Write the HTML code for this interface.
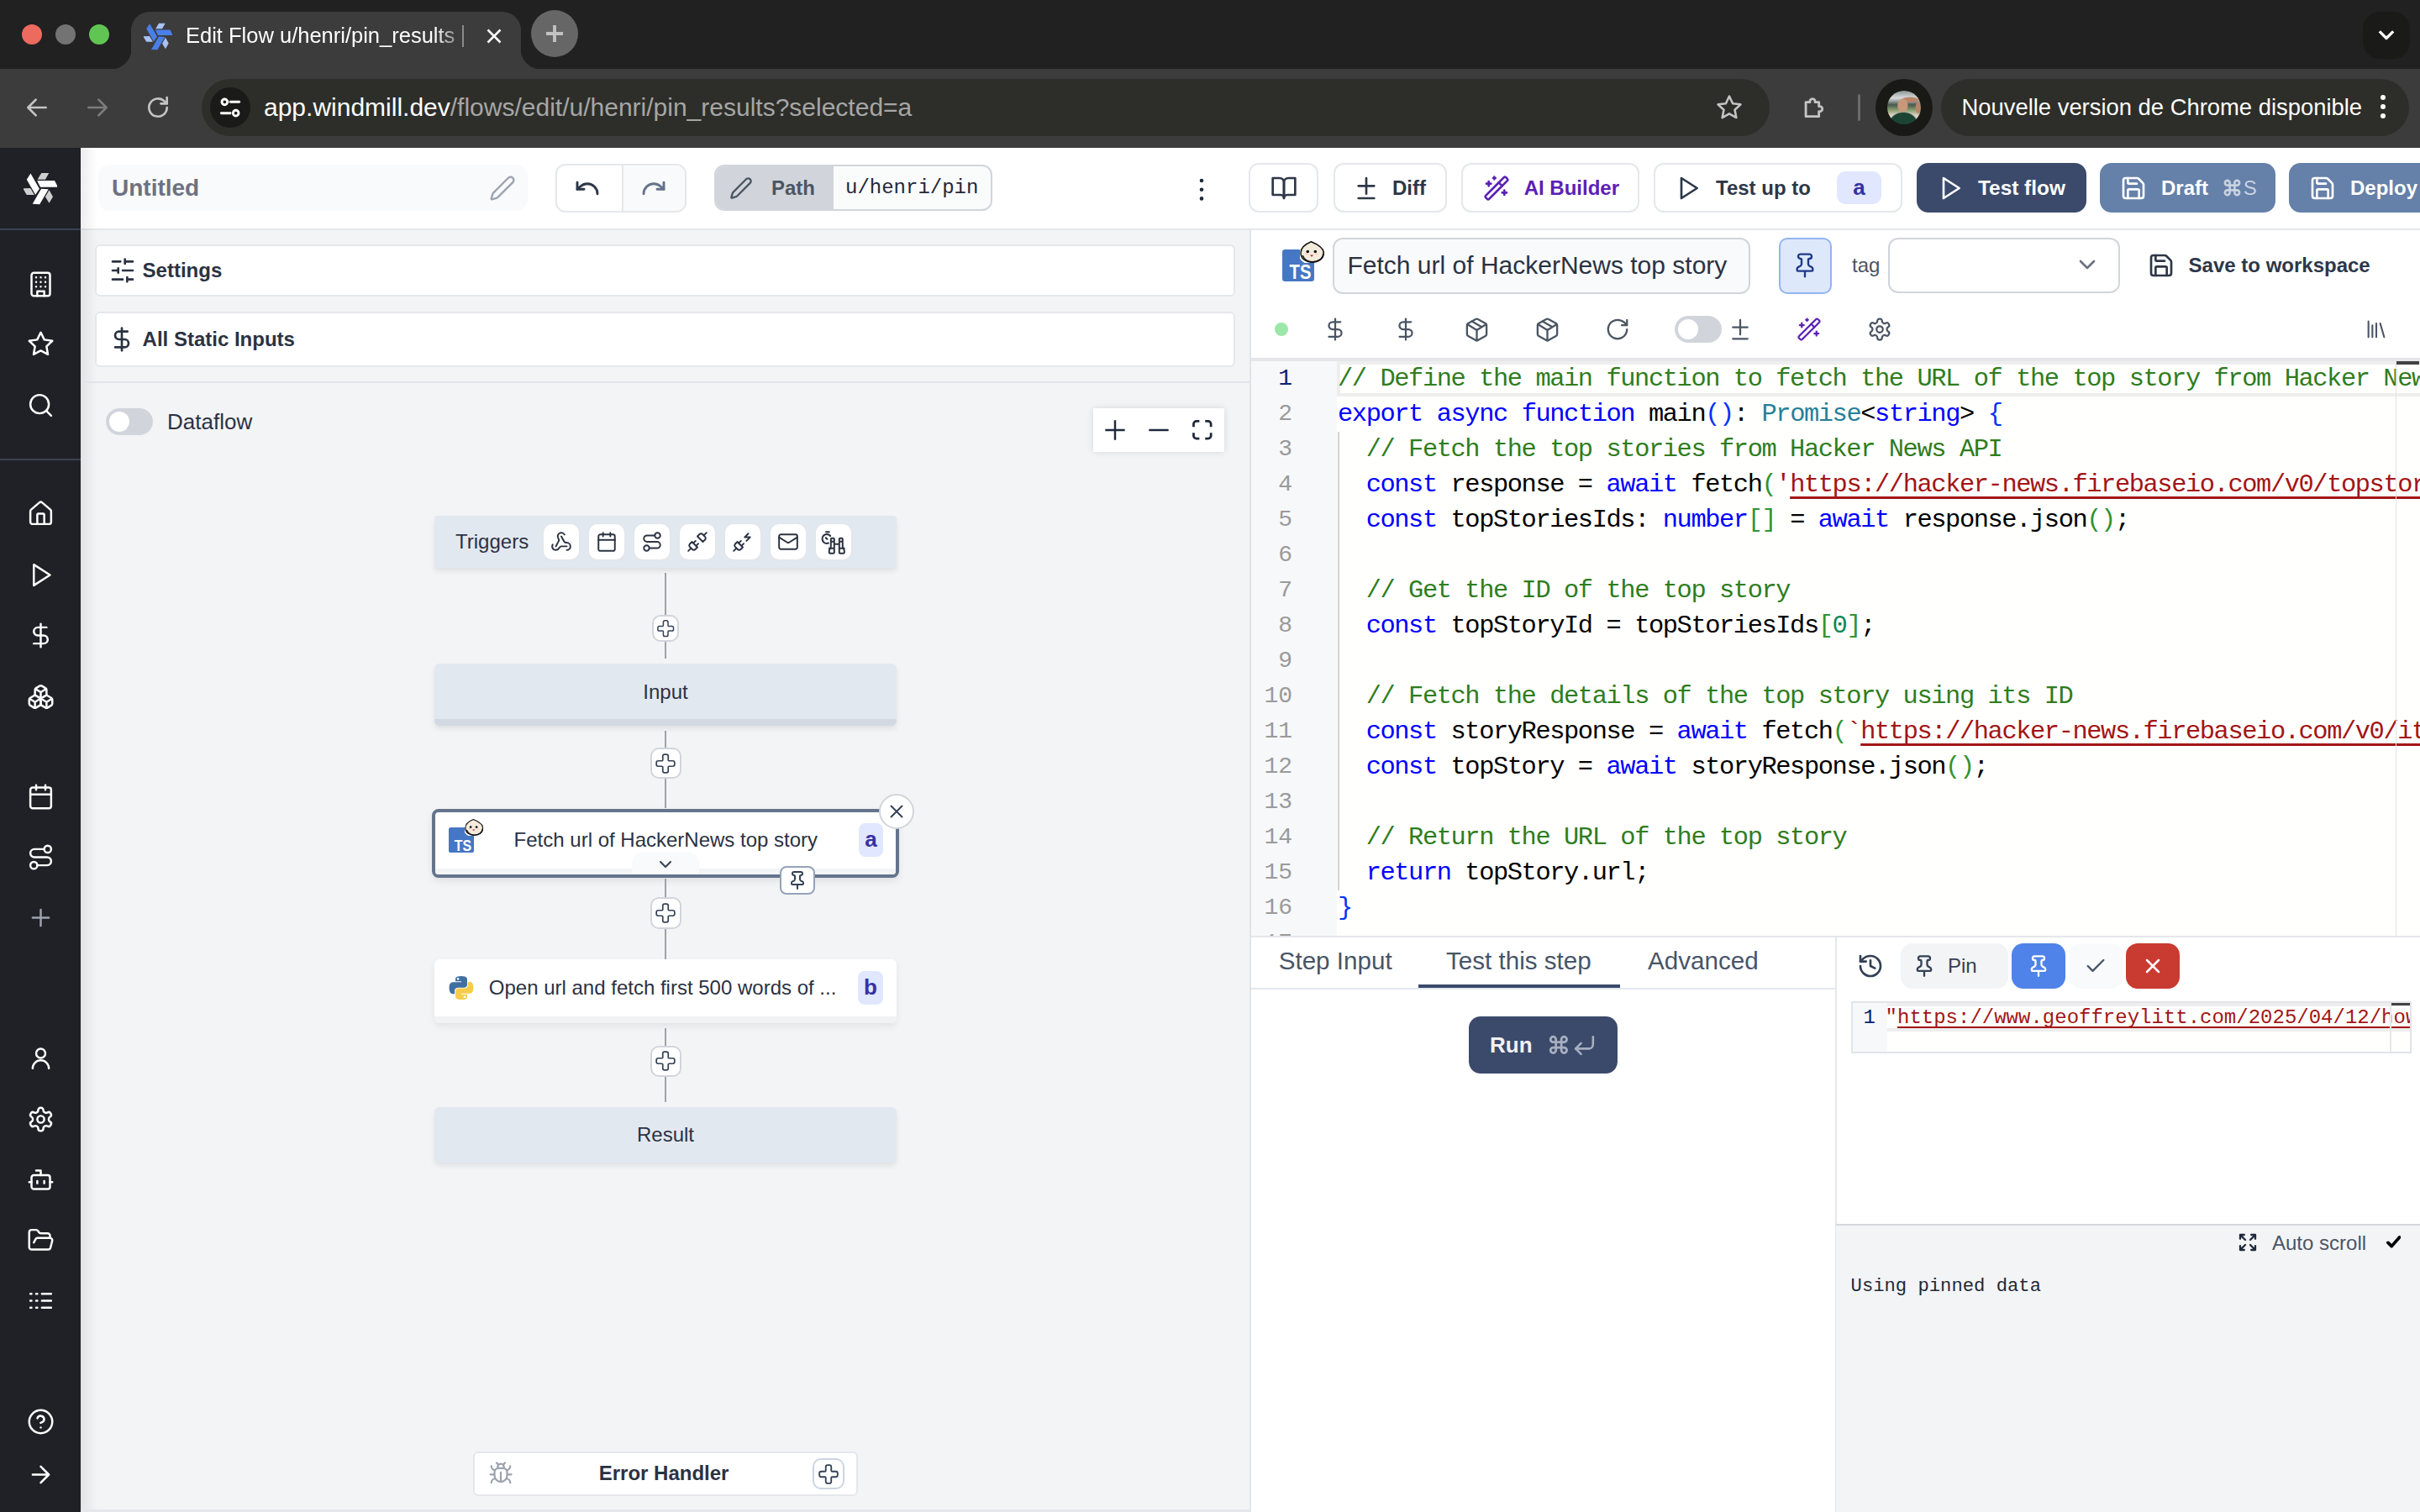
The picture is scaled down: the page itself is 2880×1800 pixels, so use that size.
<!DOCTYPE html>
<html><head><meta charset="utf-8">
<style>
html,body{margin:0;padding:0;overflow:hidden;background:#fff}
#r{zoom:2;position:relative;width:1440px;height:900px;overflow:hidden;font-family:"Liberation Sans",sans-serif;color:#2b3242}
.a{position:absolute}
svg.i{position:absolute;fill:none;stroke:currentColor;stroke-width:2;stroke-linecap:round;stroke-linejoin:round}
.t{position:absolute;white-space:pre}
.mono{font-family:"Liberation Mono",monospace}
@media (max-width:2000px){#r{zoom:1}}
.cl{font-size:15.2px!important;letter-spacing:-0.711px}
</style></head><body><div id="r">

<!-- ===== CHROME TAB STRIP ===== -->
<div class="a" style="left:0;top:0;width:1440px;height:41px;background:#212121"></div>
<div class="a" style="left:13px;top:14.5px;width:12px;height:12px;border-radius:50%;background:#ed6a5e"></div>
<div class="a" style="left:33px;top:14.5px;width:12px;height:12px;border-radius:50%;background:#737373"></div>
<div class="a" style="left:53px;top:14.5px;width:12px;height:12px;border-radius:50%;background:#61c554"></div>
<!-- tab -->
<div class="a" style="left:78px;top:7px;width:232px;height:34px;background:#3c3c3c;border-radius:11px 11px 0 0"></div>
<div class="a" style="left:66px;top:29px;width:12px;height:12px;background:radial-gradient(circle at 0 0,transparent 12px,#3c3c3c 12.5px)"></div>
<div class="a" style="left:310px;top:29px;width:12px;height:12px;background:radial-gradient(circle at 100% 0,transparent 12px,#3c3c3c 12.5px)"></div>
<svg class="a" style="left:85.5px;top:13px" width="17" height="17" viewBox="-235 -235 470 470">
 <g><polygon points="-45,-105 200,-105 245,-15 0,-15" fill="#4a7fe8"/></g>
 <g transform="rotate(120)"><polygon points="-45,-105 200,-105 245,-15 0,-15" fill="#4a7fe8"/></g><g transform="rotate(240)"><polygon points="-45,-105 200,-105 245,-15 0,-15" fill="#4a7fe8"/></g>
 <g><polygon points="120,-212 15,-212 -40,-120 70,-120" fill="#a9c2f3"/></g>
 <g transform="rotate(120)"><polygon points="120,-212 15,-212 -40,-120 70,-120" fill="#a9c2f3"/></g><g transform="rotate(240)"><polygon points="120,-212 15,-212 -40,-120 70,-120" fill="#a9c2f3"/></g>
</svg>
<div class="t" style="left:110.5px;top:12px;font-size:12.75px;line-height:18px;color:#fff;width:162px;overflow:hidden;-webkit-mask-image:linear-gradient(90deg,#000 148px,rgba(0,0,0,.35) 162px)">Edit Flow u/henri/pin_results | Windmill</div>
<div class="a" style="left:275px;top:15px;width:1px;height:13px;background:#8a8a8a"></div>
<svg class="i" style="left:288.75px;top:16.5px;color:#fff;stroke-width:3;stroke-linecap:butt" width="10" height="10" viewBox="0 0 24 24"><path d="M3 3 21 21M21 3 3 21"/></svg>
<div class="a" style="left:316px;top:6px;width:28px;height:28px;border-radius:50%;background:#666666"></div>
<svg class="i" style="left:325px;top:15px;color:#c2c2c2;stroke-width:4.6;stroke-linecap:butt" width="10" height="10" viewBox="0 0 24 24"><path d="M12 0v24M0 12h24"/></svg>
<div class="a" style="left:1406px;top:7px;width:28px;height:28px;border-radius:10px;background:#1a1a18"></div>
<svg class="i" style="left:1413px;top:14px;color:#fff;stroke-width:2.8;stroke-linecap:butt" width="14" height="14" viewBox="0 0 24 24"><path d="M5 8l7 7 7-7"/></svg>

<!-- ===== CHROME TOOLBAR ===== -->
<div class="a" style="left:0;top:41px;width:1440px;height:47px;background:#3c3c3c"></div>
<svg class="i" style="left:14px;top:56px;color:#c4c4c4" width="16" height="16" viewBox="0 0 24 24"><path d="M20 12H4M11 5l-7 7 7 7"/></svg>
<svg class="i" style="left:50px;top:56px;color:#7c7c7c" width="16" height="16" viewBox="0 0 24 24"><path d="M4 12h16M13 5l7 7-7 7"/></svg>
<svg class="i" style="left:86px;top:56px;color:#c4c4c4" width="16" height="16" viewBox="0 0 24 24"><path d="M20 12a8 8 0 1 1-2.4-5.7L20 8.5"/><path d="M20 3v5.5h-5.5"/></svg>
<div class="a" style="left:120px;top:47px;width:933px;height:34px;border-radius:17px;background:#2d2e29"></div>
<div class="a" style="left:125px;top:52px;width:24px;height:24px;border-radius:50%;background:#1a1a18"></div>
<svg class="i" style="left:129px;top:56px;color:#fff;stroke-width:2.2" width="16" height="16" viewBox="0 0 24 24"><circle cx="7" cy="7" r="2.5"/><path d="M12 7h8"/><circle cx="17" cy="17" r="2.5"/><path d="M4 17h8"/></svg>
<div class="t" style="left:157px;top:55px;font-size:15px;line-height:18px;color:#fff">app.windmill.dev<span style="color:#a6a6a6">/flows/edit/u/henri/pin_results?selected=a</span></div>
<svg class="i" style="left:1020.5px;top:55.5px;color:#c4c4c4;stroke-width:1.8" width="17" height="17" viewBox="0 0 24 24"><polygon points="12 2.5 14.9 8.6 21.5 9.4 16.6 13.9 17.9 20.5 12 17.2 6.1 20.5 7.4 13.9 2.5 9.4 9.1 8.6"/></svg>
<svg class="i" style="left:1071px;top:55.5px;color:#c4c4c4;stroke-width:2" width="17" height="17" viewBox="0 0 24 24"><path d="M5 7.5h3.5a2.2 2.2 0 1 1 4.2 0H16v3.6a2.2 2.2 0 1 1 0 4.2V19.5H5z"/></svg>
<div class="a" style="left:1105.25px;top:56px;width:1.5px;height:16px;background:#6b6b6b;border-radius:1px"></div>
<div class="a" style="left:1116px;top:47px;width:34px;height:34px;border-radius:50%;background:#191916"></div>
<div class="a" style="left:1122.9px;top:53.8px;width:20.2px;height:20.2px;border-radius:50%;background:radial-gradient(ellipse 17% 22% at 46% 44%,#c9987a 0 80%,transparent 100%),radial-gradient(ellipse 28% 9% at 68% 27%,#b98467 0 75%,transparent 100%),radial-gradient(ellipse 9% 20% at 92% 50%,#b98467 0 75%,transparent 100%),radial-gradient(ellipse 42% 32% at 48% 95%,#1c4434 0 90%,transparent 100%),linear-gradient(180deg,#8c9496 0,#d9dcdc 22%,#4a5650 42%,#7f9466 55%,#d6cfbd 72%,#d6cfbd 100%)"></div>
<div class="a" style="left:1155px;top:47px;width:278.5px;height:34px;border-radius:17px;background:#2d2e29"></div>
<div class="t" style="left:1167.25px;top:55px;font-size:13.7px;line-height:18px;color:#fff">Nouvelle version de Chrome disponible</div>
<div class="a" style="left:1416.3px;top:56.5px;width:3px;height:3px;border-radius:50%;background:#fff;box-shadow:0 5.5px 0 #fff,0 11px 0 #fff"></div>

<!-- ===== APP SIDEBAR ===== -->
<div class="a" id="sidebar" style="left:0;top:88px;width:48px;height:812px;background:#1f2127"></div>
<div class="a" style="left:0;top:136px;width:48px;height:1px;background:#3b4250"></div>
<div class="a" style="left:0;top:273px;width:48px;height:1px;background:#3b4250"></div>
<svg class="a" style="left:14px;top:102px" width="20" height="20" viewBox="-235 -235 470 470">
 <g><polygon points="-45,-105 200,-105 245,-15 0,-15" fill="#fff"/></g>
 <g transform="rotate(120)"><polygon points="-45,-105 200,-105 245,-15 0,-15" fill="#fff"/></g><g transform="rotate(240)"><polygon points="-45,-105 200,-105 245,-15 0,-15" fill="#fff"/></g>
 <g><polygon points="120,-212 15,-212 -40,-120 70,-120" fill="#cfcfcf"/></g>
 <g transform="rotate(120)"><polygon points="120,-212 15,-212 -40,-120 70,-120" fill="#cfcfcf"/></g><g transform="rotate(240)"><polygon points="120,-212 15,-212 -40,-120 70,-120" fill="#cfcfcf"/></g>
</svg>
<svg class="i" style="left:15.75px;top:160.75px;color:#fff;stroke-width:1.8" width="16.5" height="16.5" viewBox="0 0 24 24"><rect width="16" height="20" x="4" y="2" rx="2"/><path d="M9 22v-4h6v4M8 6h.01M16 6h.01M12 6h.01M12 10h.01M12 14h.01M16 10h.01M16 14h.01M8 10h.01M8 14h.01"/></svg>
<svg class="i" style="left:15.75px;top:196.55px;color:#fff;stroke-width:1.8" width="16.5" height="16.5" viewBox="0 0 24 24"><polygon points="12 2 15.09 8.26 22 9.27 17 14.14 18.18 21.02 12 17.77 5.82 21.02 7 14.14 2 9.27 8.91 8.26 12 2"/></svg>
<svg class="i" style="left:15.75px;top:232.75px;color:#fff;stroke-width:1.8" width="16.5" height="16.5" viewBox="0 0 24 24"><circle cx="11" cy="11" r="8"/><path d="m21 21-4.3-4.3"/></svg>
<svg class="i" style="left:15.75px;top:297.25px;color:#fff;stroke-width:1.8" width="16.5" height="16.5" viewBox="0 0 24 24"><path d="M15 21v-8a1 1 0 0 0-1-1h-4a1 1 0 0 0-1 1v8"/><path d="M3 10a2 2 0 0 1 .709-1.528l7-5.999a2 2 0 0 1 2.582 0l7 5.999A2 2 0 0 1 21 10v9a2 2 0 0 1-2 2H5a2 2 0 0 1-2-2z"/></svg>
<svg class="i" style="left:15.75px;top:333.75px;color:#fff;stroke-width:1.8" width="16.5" height="16.5" viewBox="0 0 24 24"><polygon points="6 3 20 12 6 21 6 3"/></svg>
<svg class="i" style="left:15.75px;top:369.75px;color:#fff;stroke-width:1.8" width="16.5" height="16.5" viewBox="0 0 24 24"><line x1="12" x2="12" y1="2" y2="22"/><path d="M17 5H9.5a3.5 3.5 0 0 0 0 7h5a3.5 3.5 0 0 1 0 7H6"/></svg>
<svg class="i" style="left:15.75px;top:406.25px;color:#fff;stroke-width:1.8" width="16.5" height="16.5" viewBox="0 0 24 24"><path d="M2.97 12.92A2 2 0 0 0 2 14.63v3.24a2 2 0 0 0 .97 1.71l3 1.8a2 2 0 0 0 2.06 0L12 19v-5.5l-5-3-4.03 2.42Z"/><path d="m7 16.5-4.74-2.85M7 16.5l5-3M7 16.5v5.17M12 13.5V19l3.97 2.38a2 2 0 0 0 2.06 0l3-1.8a2 2 0 0 0 .97-1.71v-3.24a2 2 0 0 0-.97-1.71L17 10.5l-5 3Z"/><path d="m17 16.5-5-3M17 16.5l4.74-2.85M17 16.5v5.17M7.97 4.42A2 2 0 0 0 7 6.13v4.37l5 3 5-3V6.13a2 2 0 0 0-.97-1.71l-3-1.8a2 2 0 0 0-2.06 0l-3 1.8Z"/><path d="M12 8 7.26 5.15M12 8l4.74-2.85M12 13.5V8"/></svg>
<svg class="i" style="left:15.75px;top:465.75px;color:#fff;stroke-width:1.8" width="16.5" height="16.5" viewBox="0 0 24 24"><rect width="18" height="18" x="3" y="4" rx="2"/><path d="M16 2v4M8 2v4M3 10h18"/></svg>
<svg class="i" style="left:15.75px;top:501.75px;color:#fff;stroke-width:1.8" width="16.5" height="16.5" viewBox="0 0 24 24"><circle cx="6" cy="19" r="3"/><path d="M9 19h8.5a3.5 3.5 0 0 0 0-7h-11a3.5 3.5 0 0 1 0-7H15"/><circle cx="18" cy="5" r="3"/></svg>
<svg class="i" style="left:15.75px;top:537.75px;color:#9ca3af;stroke-width:1.8" width="16.5" height="16.5" viewBox="0 0 24 24"><path d="M5 12h14M12 5v14"/></svg>
<svg class="i" style="left:15.75px;top:621.50px;color:#fff;stroke-width:1.8" width="16.5" height="16.5" viewBox="0 0 24 24"><circle cx="12" cy="8" r="4"/><path d="M19 21a7 7 0 0 0-14 0"/></svg>
<svg class="i" style="left:15.75px;top:657.75px;color:#fff;stroke-width:1.8" width="16.5" height="16.5" viewBox="0 0 24 24"><path d="M12.22 2h-.44a2 2 0 0 0-2 2v.18a2 2 0 0 1-1 1.73l-.43.25a2 2 0 0 1-2 0l-.15-.08a2 2 0 0 0-2.73.73l-.22.38a2 2 0 0 0 .73 2.73l.15.1a2 2 0 0 1 1 1.72v.51a2 2 0 0 1-1 1.74l-.15.09a2 2 0 0 0-.73 2.73l.22.38a2 2 0 0 0 2.73.73l.15-.08a2 2 0 0 1 2 0l.43.25a2 2 0 0 1 1 1.73V20a2 2 0 0 0 2 2h.44a2 2 0 0 0 2-2v-.18a2 2 0 0 1 1-1.73l.43-.25a2 2 0 0 1 2 0l.15.08a2 2 0 0 0 2.73-.73l.22-.39a2 2 0 0 0-.73-2.73l-.15-.08a2 2 0 0 1-1-1.74v-.5a2 2 0 0 1 1-1.74l.15-.09a2 2 0 0 0 .73-2.73l-.22-.38a2 2 0 0 0-2.73-.73l-.15.08a2 2 0 0 1-2 0l-.43-.25a2 2 0 0 1-1-1.73V4a2 2 0 0 0-2-2z"/><circle cx="12" cy="12" r="3"/></svg>
<svg class="i" style="left:15.75px;top:693.75px;color:#fff;stroke-width:1.8" width="16.5" height="16.5" viewBox="0 0 24 24"><path d="M12 8V4H8"/><rect width="16" height="12" x="4" y="8" rx="2"/><path d="M2 14h2M20 14h2M15 13v2M9 13v2"/></svg>
<svg class="i" style="left:15.75px;top:729.75px;color:#fff;stroke-width:1.8" width="16.5" height="16.5" viewBox="0 0 24 24"><path d="m6 14 1.5-2.9A2 2 0 0 1 9.24 10H20a2 2 0 0 1 1.94 2.5l-1.54 6a2 2 0 0 1-1.95 1.5H4a2 2 0 0 1-2-2V5a2 2 0 0 1 2-2h3.9a2 2 0 0 1 1.69.9l.81 1.2a2 2 0 0 0 1.67.9H18a2 2 0 0 1 2 2v2"/></svg>
<svg class="i" style="left:15.75px;top:765.75px;color:#fff;stroke-width:1.8" width="16.5" height="16.5" viewBox="0 0 24 24"><path d="M13 12h8M13 18h8M13 6h8M3 12h1M3 18h1M3 6h1M8 12h1M8 18h1M8 6h1"/></svg>
<svg class="i" style="left:15.75px;top:837.75px;color:#fff;stroke-width:1.8" width="16.5" height="16.5" viewBox="0 0 24 24"><circle cx="12" cy="12" r="10"/><path d="M9.09 9a3 3 0 0 1 5.83 1c0 2-3 3-3 3M12 17h.01"/></svg>
<svg class="i" style="left:15.75px;top:869.55px;color:#fff;stroke-width:1.8" width="16.5" height="16.5" viewBox="0 0 24 24"><path d="M5 12h14M12 5l7 7-7 7"/></svg>

<!-- ===== HEADER ===== -->
<div class="a" id="header" style="left:48px;top:88px;width:1392px;height:49px;background:#fff;border-bottom:1px solid #e5e7eb;box-sizing:border-box"></div>
<div class="a" style="left:58.5px;top:98px;width:255.5px;height:27.5px;background:#f9fafb;border-radius:7px"></div>
<div class="t" style="left:66.5px;top:104px;font-size:14px;line-height:16px;font-weight:700;color:#6b7280">Untitled</div>
<svg class="i" style="left:291px;top:104.2px;color:#9ca3af;stroke-width:1.8" width="16" height="16" viewBox="0 0 24 24"><path d="M21.174 6.812a1 1 0 0 0-3.986-3.987L3.842 16.174a2 2 0 0 0-.5.83l-1.321 4.352a.5.5 0 0 0 .623.622l4.353-1.32a2 2 0 0 0 .83-.497z"/></svg>
<div class="a" style="left:330.5px;top:97.3px;width:78px;height:29.2px;border:1px solid #e5e7eb;border-radius:6px;box-sizing:border-box;overflow:hidden;background:#fff"><div class="a" style="left:38.5px;top:0;width:40px;height:30px;background:#f9fafb;border-left:1px solid #e5e7eb"></div></div>
<svg class="i" style="left:341.7px;top:104px;color:#2d3748;stroke-width:2.2" width="16" height="16" viewBox="0 0 24 24"><path d="M3 7v6h6"/><path d="M21 17a9 9 0 0 0-9-9 9 9 0 0 0-6 2.3L3 13"/></svg>
<svg class="i" style="left:381px;top:104px;color:#64748b;stroke-width:2.2" width="16" height="16" viewBox="0 0 24 24"><path d="M21 7v6h-6"/><path d="M3 17a9 9 0 0 1 9-9 9 9 0 0 1 6 2.3l3 2.7"/></svg>
<div class="a" style="left:425px;top:98px;width:165.5px;height:27.5px;border:1px solid #d1d5db;border-radius:6px;box-sizing:border-box;overflow:hidden;background:#fafbfb"><div class="a" style="left:0;top:0;width:70px;height:28px;background:#d1d5db"></div></div>
<svg class="i" style="left:434px;top:105px;color:#4b5563;stroke-width:2" width="14" height="14" viewBox="0 0 24 24"><path d="M21.174 6.812a1 1 0 0 0-3.986-3.987L3.842 16.174a2 2 0 0 0-.5.83l-1.321 4.352a.5.5 0 0 0 .623.622l4.353-1.32a2 2 0 0 0 .83-.497z"/></svg>
<div class="t" style="left:459px;top:105px;font-size:12px;line-height:14px;font-weight:700;color:#4b5563">Path</div>
<div class="t mono" style="left:503px;top:105px;font-size:12px;line-height:14px;color:#1f2937">u/henri/pin</div>
<div class="a" style="left:714px;top:106.3px;width:2px;height:2px;border-radius:50%;background:#1f2937;box-shadow:0 4.65px 0 #1f2937,0 9.3px 0 #1f2937;transform:scale(1.15)"></div>

<div class="a" style="left:743px;top:97px;width:41.5px;height:29.5px;border:1px solid #e5e7eb;border-radius:6px;box-sizing:border-box"></div>
<svg class="i" style="left:755.75px;top:104px;color:#2d3748;stroke-width:2" width="16" height="16" viewBox="0 0 24 24"><path d="M2 3h6a4 4 0 0 1 4 4v14a3 3 0 0 0-3-3H2z"/><path d="M22 3h-6a4 4 0 0 0-4 4v14a3 3 0 0 1 3-3h7z"/></svg>
<div class="a" style="left:793.3px;top:97px;width:67.7px;height:29.5px;border:1px solid #e5e7eb;border-radius:6px;box-sizing:border-box"></div>
<svg class="i" style="left:804.8px;top:104px;color:#2d3748;stroke-width:2" width="16" height="16" viewBox="0 0 24 24"><path d="M12 3v14M5 10h14M5 21h14"/></svg>
<div class="t" style="left:828.5px;top:105px;font-size:12px;line-height:14px;font-weight:700;color:#2d3748">Diff</div>
<div class="a" style="left:869.5px;top:97px;width:105.75px;height:29.5px;border:1px solid #e5e7eb;border-radius:6px;box-sizing:border-box"></div>
<svg class="i" style="left:882.5px;top:104px;color:#5b21b6;stroke-width:2" width="16" height="16" viewBox="0 0 24 24"><path d="m21.64 3.64-1.28-1.28a1.21 1.21 0 0 0-1.72 0L2.36 18.64a1.21 1.21 0 0 0 0 1.72l1.28 1.28a1.2 1.2 0 0 0 1.72 0L21.64 5.36a1.2 1.2 0 0 0 0-1.72"/><path d="m14 7 3 3M5 6v4M19 14v4M10 2v2M7 8H3M21 16h-4M11 3H9"/></svg>
<div class="t" style="left:906.85px;top:105px;font-size:12px;line-height:14px;font-weight:700;color:#5b21b6">AI Builder</div>
<div class="a" style="left:983.75px;top:97px;width:148.25px;height:29.5px;border:1px solid #e5e7eb;border-radius:6px;box-sizing:border-box"></div>
<svg class="i" style="left:996.5px;top:104px;color:#2d3748;stroke-width:2" width="16" height="16" viewBox="0 0 24 24"><polygon points="6 3 20 12 6 21 6 3"/></svg>
<div class="t" style="left:1021px;top:105px;font-size:12px;line-height:14px;font-weight:700;color:#2d3748">Test up to</div>
<div class="a" style="left:1093px;top:102px;width:26.5px;height:19.5px;background:#e0e7ff;border-radius:5px;color:#3730a3;font-weight:700;font-size:13px;line-height:19px;text-align:center">a</div>
<div class="a" style="left:1140.5px;top:97px;width:101px;height:29.5px;background:#3b4a6b;border-radius:7px"></div>
<svg class="i" style="left:1152.4px;top:104px;color:#fff;stroke-width:2" width="16" height="16" viewBox="0 0 24 24"><polygon points="6 3 20 12 6 21 6 3"/></svg>
<div class="t" style="left:1177px;top:105px;font-size:12.2px;line-height:14px;font-weight:700;color:#fff">Test flow</div>
<div class="a" style="left:1249.5px;top:97px;width:104.25px;height:29.5px;background:#6580a9;border-radius:7px"></div>
<svg class="i" style="left:1261.3px;top:104px;color:#fff;stroke-width:2" width="16" height="16" viewBox="0 0 24 24"><path d="M15.2 3a2 2 0 0 1 1.4.6l3.8 3.8a2 2 0 0 1 .6 1.4V19a2 2 0 0 1-2 2H5a2 2 0 0 1-2-2V5a2 2 0 0 1 2-2z"/><path d="M17 21v-7a1 1 0 0 0-1-1H8a1 1 0 0 0-1 1v7M7 3v4a1 1 0 0 0 1 1h7"/></svg>
<div class="t" style="left:1286px;top:105px;font-size:12px;line-height:14px;font-weight:700;color:#fff">Draft</div>
<svg class="i" style="left:1322.5px;top:105.85px;color:#c9d2e0;stroke-width:2.7" width="11.5" height="11.5" viewBox="0 0 24 24"><path d="M15 6v12a3 3 0 1 0 3-3H6a3 3 0 1 0 3 3V6a3 3 0 1 0-3 3h12a3 3 0 1 0-3-3"/></svg><div class="t" style="left:1334.9px;top:105px;font-size:12px;line-height:14px;color:#c9d2e0">S</div>
<div class="a" style="left:1362px;top:97px;width:100px;height:29.5px;background:#6580a9;border-radius:7px"></div>
<svg class="i" style="left:1373.8px;top:104px;color:#fff;stroke-width:2" width="16" height="16" viewBox="0 0 24 24"><path d="M15.2 3a2 2 0 0 1 1.4.6l3.8 3.8a2 2 0 0 1 .6 1.4V19a2 2 0 0 1-2 2H5a2 2 0 0 1-2-2V5a2 2 0 0 1 2-2z"/><path d="M17 21v-7a1 1 0 0 0-1-1H8a1 1 0 0 0-1 1v7M7 3v4a1 1 0 0 0 1 1h7"/></svg>
<div class="t" style="left:1398.5px;top:105px;font-size:12px;line-height:14px;font-weight:700;color:#fff">Deploy</div>

<!-- ===== LEFT PANE ===== -->
<div class="a" id="left" style="left:48px;top:137px;width:696px;height:763px;background:#f3f4f6"></div>
<div class="a" style="left:48px;top:88px;width:10px;height:812px;background:linear-gradient(90deg,rgba(0,0,0,.07),rgba(0,0,0,0))"></div>
<div class="a" style="left:56.5px;top:145.5px;width:678.5px;height:31px;background:#fff;border:1px solid #e5e7eb;border-radius:3px;box-sizing:border-box"></div>
<svg class="i" style="left:64.8px;top:152.9px;color:#2b3242;stroke-width:2" width="16" height="16" viewBox="0 0 24 24"><path d="M21 4h-7M10 4H3M21 12h-9M8 12H3M21 20h-5M12 20H3M14 2v4M8 10v4M16 18v4"/></svg>
<div class="t" style="left:84.8px;top:154px;font-size:12px;line-height:14px;font-weight:700;color:#2b3242">Settings</div>
<div class="a" style="left:56.5px;top:185.7px;width:678.5px;height:32.8px;background:#fff;border:1px solid #e5e7eb;border-radius:3px;box-sizing:border-box"></div>
<svg class="i" style="left:64.5px;top:193.8px;color:#2b3242;stroke-width:2" width="16" height="16" viewBox="0 0 24 24"><line x1="12" x2="12" y1="2" y2="22"/><path d="M17 5H9.5a3.5 3.5 0 0 0 0 7h5a3.5 3.5 0 0 1 0 7H6"/></svg>
<div class="t" style="left:84.8px;top:195px;font-size:12px;line-height:14px;font-weight:700;color:#2b3242">All Static Inputs</div>
<div class="a" style="left:48px;top:227px;width:696px;height:1px;background:#e2e4e9"></div>
<div class="a" style="left:63px;top:243px;width:28px;height:16px;border-radius:8px;background:#d1d5db"></div>
<div class="a" style="left:65px;top:245px;width:12px;height:12px;border-radius:50%;background:#fff"></div>
<div class="t" style="left:99.5px;top:243.5px;font-size:13px;line-height:15px;color:#2b3242">Dataflow</div>
<div class="a" style="left:650.5px;top:243px;width:78px;height:26px;background:#fff;box-shadow:0 0 4px rgba(0,0,0,.12)"></div>
<svg class="i" style="left:656.5px;top:249px;color:#1e293b;stroke-width:2.1;stroke-linecap:butt" width="14" height="14" viewBox="0 0 24 24"><path d="M12 2v20M2 12h20"/></svg>
<svg class="i" style="left:682.5px;top:249px;color:#1e293b;stroke-width:2.1;stroke-linecap:butt" width="14" height="14" viewBox="0 0 24 24"><path d="M2 12h20"/></svg>
<svg class="i" style="left:708.5px;top:249.1px;color:#1e293b;stroke-width:2.4;stroke-linecap:butt" width="13.8" height="13.8" viewBox="0 0 24 24"><path d="M3 9V6a3 3 0 0 1 3-3h3M15 3h3a3 3 0 0 1 3 3v3M21 15v3a3 3 0 0 1-3 3h-3M9 21H6a3 3 0 0 1-3-3v-3"/></svg>

<div class="a" style="left:258.5px;top:307px;width:275px;height:31px;background:#e2e8f0;border-radius:2px;box-shadow:0 2px 3px rgba(0,0,0,.08)"></div>
<div class="t" style="left:271px;top:315.5px;font-size:12px;line-height:14px;color:#2b3242">Triggers</div>
<div class="a" style="left:323.5px;top:312px;width:21px;height:21px;background:#fff;border-radius:5px;box-shadow:0 0 0 0.6px #e3e5e9"></div><svg class="i" style="left:327.5px;top:316px;color:#2b3242;stroke-width:1.8" width="13" height="13" viewBox="0 0 24 24"><path d="M18 16.98h-5.99c-1.1 0-1.95.94-2.48 1.9A4 4 0 0 1 2 17c.01-.7.2-1.4.57-2"/><path d="m6 17 3.13-5.78c.53-.97.1-2.18-.5-3.1a4 4 0 1 1 6.89-4.06"/><path d="m12 6 3.13 5.73C15.66 12.7 16.9 13 18 13a4 4 0 0 1 0 8"/></svg>
<div class="a" style="left:350.5px;top:312px;width:21px;height:21px;background:#fff;border-radius:5px;box-shadow:0 0 0 0.6px #e3e5e9"></div><svg class="i" style="left:354.5px;top:316px;color:#2b3242;stroke-width:1.8" width="13" height="13" viewBox="0 0 24 24"><rect width="18" height="18" x="3" y="4" rx="2"/><path d="M16 2v4M8 2v4M3 10h18"/></svg>
<div class="a" style="left:377.5px;top:312px;width:21px;height:21px;background:#fff;border-radius:5px;box-shadow:0 0 0 0.6px #e3e5e9"></div><svg class="i" style="left:381.5px;top:316px;color:#2b3242;stroke-width:1.8" width="13" height="13" viewBox="0 0 24 24"><circle cx="6" cy="19" r="3"/><path d="M9 19h8.5a3.5 3.5 0 0 0 0-7h-11a3.5 3.5 0 0 1 0-7H15"/><circle cx="18" cy="5" r="3"/></svg>
<div class="a" style="left:404.5px;top:312px;width:21px;height:21px;background:#fff;border-radius:5px;box-shadow:0 0 0 0.6px #e3e5e9"></div><svg class="i" style="left:408.5px;top:316px;color:#2b3242;stroke-width:1.8" width="13" height="13" viewBox="0 0 24 24"><path d="m19 5 3-3M2 22l3-3"/><path d="M6.3 20.3a2.4 2.4 0 0 0 3.4 0L12 18l-6-6-2.3 2.3a2.4 2.4 0 0 0 0 3.4Z"/><path d="M7.5 13.5 10 11M10.5 16.5 13 14"/><path d="m12 6 6 6 2.3-2.3a2.4 2.4 0 0 0 0-3.4l-2.6-2.6a2.4 2.4 0 0 0-3.4 0Z"/></svg>
<div class="a" style="left:431.5px;top:312px;width:21px;height:21px;background:#fff;border-radius:5px;box-shadow:0 0 0 0.6px #e3e5e9"></div><svg class="i" style="left:435.5px;top:316px;color:#2b3242;stroke-width:1.8" width="13" height="13" viewBox="0 0 24 24"><path d="M6.3 20.3a2.4 2.4 0 0 0 3.4 0L12 18l-6-6-2.3 2.3a2.4 2.4 0 0 0 0 3.4Z"/><path d="m2 22 3-3M7.5 13.5 10 11M10.5 16.5 13 14"/><path d="m18 3-4 4h6l-4 4"/></svg>
<div class="a" style="left:458.5px;top:312px;width:21px;height:21px;background:#fff;border-radius:5px;box-shadow:0 0 0 0.6px #e3e5e9"></div><svg class="i" style="left:462.5px;top:316px;color:#2b3242;stroke-width:1.8" width="13" height="13" viewBox="0 0 24 24"><rect width="20" height="16" x="2" y="4" rx="2"/><path d="m22 7-8.97 5.7a1.94 1.94 0 0 1-2.06 0L2 7"/></svg>
<div class="a" style="left:485.5px;top:312px;width:21px;height:21px;background:#fff;border-radius:5px;box-shadow:0 0 0 0.6px #e3e5e9"></div><svg class="a" style="left:485.5px;top:312px;color:#2b3242" width="21" height="21" viewBox="0 0 21 21" fill="none" stroke="currentColor" stroke-linecap="round" stroke-linejoin="round"><g stroke-width="1.05"><path d="M8.57 7.01A2.7 2.7 0 1 0 7.42 11.29"/><path d="M6 4.6h1.9M5.9 8.1l0.8 0.8"/></g><g transform="translate(6.4,6.9) scale(0.5)" stroke-width="2"><path d="M10 10h4M19 7V4a1 1 0 0 0-1-1h-2a1 1 0 0 0-1 1v3M20 21a1 1 0 0 0 1-1v-1.93a4 4 0 0 0-.94-2.58l-.38-.47A4 4 0 0 1 19 12.44V8a1 1 0 0 0-1-1h-2a1 1 0 0 0-1 1v12a1 1 0 0 0 1 1zM15 15h6M9 15H3M4 21a1 1 0 0 1-1-1v-1.93a4 4 0 0 1 .94-2.58l.38-.47A4 4 0 0 0 5 12.44V8a1 1 0 0 1 1-1h2a1 1 0 0 1 1 1v12a1 1 0 0 1-1 1zM9 7V4a1 1 0 0 0-1-1H6a1 1 0 0 0-1 1v3"/></g></svg>
<div class="a" style="left:395.5px;top:341px;width:1px;height:25px;background:#a1a1aa"></div>
<div class="a" style="left:388px;top:366px;width:16px;height:16px;background:#fff;border:1px solid #d1d5db;border-radius:5px;box-sizing:border-box"></div><svg class="i" style="left:390.40px;top:368.40px;color:#334155;stroke-width:1.6" width="11.2" height="11.2" viewBox="0 0 24 24"><path d="M4 9a2 2 0 0 0-2 2v2a2 2 0 0 0 2 2h4a1 1 0 0 1 1 1v4a2 2 0 0 0 2 2h2a2 2 0 0 0 2-2v-4a1 1 0 0 1 1-1h4a2 2 0 0 0 2-2v-2a2 2 0 0 0-2-2h-4a1 1 0 0 1-1-1V4a2 2 0 0 0-2-2h-2a2 2 0 0 0-2 2v4a1 1 0 0 1-1 1z"/></svg>
<div class="a" style="left:395.5px;top:382px;width:1px;height:10px;background:#a1a1aa"></div>
<div class="a" style="left:258.5px;top:395px;width:275px;height:37px;background:#e2e8f0;border-radius:3px;overflow:hidden;box-shadow:0 2px 3px rgba(0,0,0,.08)"><div class="a" style="left:0;bottom:0;width:275px;height:4px;background:#d3d9e3"></div></div>
<div class="t" style="left:258.5px;width:275px;text-align:center;top:405px;font-size:12px;line-height:14px;color:#2b3242">Input</div>
<div class="a" style="left:395.5px;top:435px;width:1px;height:10px;background:#a1a1aa"></div>
<div class="a" style="left:386.75px;top:445px;width:18.6px;height:18.6px;background:#fff;border:1px solid #d1d5db;border-radius:5px;box-sizing:border-box"></div><svg class="i" style="left:389.50px;top:447.80px;color:#334155;stroke-width:1.6" width="13" height="13" viewBox="0 0 24 24"><path d="M4 9a2 2 0 0 0-2 2v2a2 2 0 0 0 2 2h4a1 1 0 0 1 1 1v4a2 2 0 0 0 2 2h2a2 2 0 0 0 2-2v-4a1 1 0 0 1 1-1h4a2 2 0 0 0 2-2v-2a2 2 0 0 0-2-2h-4a1 1 0 0 1-1-1V4a2 2 0 0 0-2-2h-2a2 2 0 0 0-2 2v4a1 1 0 0 1-1 1z"/></svg>
<div class="a" style="left:395.5px;top:463.6px;width:1px;height:17.399999999999977px;background:#a1a1aa"></div>
<div class="a" style="left:256.8px;top:481.3px;width:278.4px;height:41.4px;background:#fff;border:2px solid #64748b;border-radius:4px;box-sizing:border-box;overflow:hidden;box-shadow:0 2px 4px rgba(0,0,0,.08)"><div class="a" style="left:0;bottom:0;width:275px;height:3.5px;background:#f3f4f6"></div></div>
<svg class="a" style="left:267px;top:492.5px" width="15" height="15" viewBox="0 0 15 15"><rect x="0" y="0" width="15" height="15" rx="1.3" fill="#4577c4"/><text x="3.4" y="13.9" font-family="Liberation Sans" font-weight="700" font-size="9.6" fill="#fff" textLength="10.2" lengthAdjust="spacingAndGlyphs">TS</text></svg><svg class="a" style="left:276.4px;top:487.35px" width="11.3" height="10.11" viewBox="700 370 570 510"><path d="M720,640 C720,520 850,430 960,385 C1070,430 1250,520 1250,650 C1250,780 1120,860 980,860 C840,860 720,780 720,640 Z" fill="#fff" stroke="#fff" stroke-width="110"/><path d="M720,640 C720,520 850,430 960,385 C1070,430 1250,520 1250,650 C1250,780 1120,860 980,860 C840,860 720,780 720,640 Z" fill="#f4ebdc" stroke="#111" stroke-width="28"/><path d="M760,700 C800,800 900,850 990,850 C1120,850 1230,780 1240,650" fill="none" stroke="#111" stroke-width="30"/><circle cx="880" cy="612" r="34" fill="#111"/><circle cx="1055" cy="612" r="34" fill="#111"/><ellipse cx="845" cy="665" rx="32" ry="16" fill="#f7bfd0"/><ellipse cx="1090" cy="665" rx="32" ry="16" fill="#f7bfd0"/><path d="M932,688 L1012,688 L972,732 Z" fill="#b3232f"/></svg>
<div class="t" style="left:305.8px;top:493px;font-size:12px;line-height:14px;color:#2b3242">Fetch url of HackerNews top story</div>
<div class="a" style="left:511px;top:490.2px;width:14.5px;height:19.6px;background:#e0e7ff;border-radius:4px;color:#3730a3;font-weight:700;font-size:13px;line-height:19.6px;text-align:center">a</div>
<div class="a" style="left:376px;top:507px;width:39.75px;height:13.5px;background:#f9fafb;border-radius:7px 7px 0 0"></div>
<svg class="i" style="left:390px;top:508.5px;color:#334155;stroke-width:2" width="12" height="12" viewBox="0 0 24 24"><path d="m6 9 6 6 6-6"/></svg>
<div class="a" style="left:523px;top:472.5px;width:21px;height:21px;border-radius:50%;background:#fff;border:1px solid #d1d5db;box-sizing:border-box"></div>
<svg class="i" style="left:527px;top:476.5px;color:#334155;stroke-width:1.8" width="13" height="13" viewBox="0 0 24 24"><path d="M18 6 6 18M6 6l12 12"/></svg>
<div class="a" style="left:463.85px;top:515.25px;width:21.35px;height:17.25px;background:#fff;border:1px solid #94a3b8;border-radius:4px;box-sizing:border-box"></div>
<svg class="i" style="left:468.5px;top:518px;color:#334155;stroke-width:2" width="12" height="12" viewBox="0 0 24 24"><path d="M12 17v5M9 10.76a2 2 0 0 1-1.11 1.79l-1.78.9A2 2 0 0 0 5 15.24V16a1 1 0 0 0 1 1h12a1 1 0 0 0 1-1v-.76a2 2 0 0 0-1.11-1.79l-1.78-.9A2 2 0 0 1 15 10.76V7a1 1 0 0 1 1-1 2 2 0 0 0 0-4H8a2 2 0 0 0 0 4 1 1 0 0 1 1 1z"/></svg>
<div class="a" style="left:395.5px;top:523px;width:1px;height:11.2px;background:#a1a1aa"></div>
<div class="a" style="left:386.75px;top:534.2px;width:18.6px;height:18.6px;background:#fff;border:1px solid #d1d5db;border-radius:5px;box-sizing:border-box"></div><svg class="i" style="left:389.50px;top:537.00px;color:#334155;stroke-width:1.6" width="13" height="13" viewBox="0 0 24 24"><path d="M4 9a2 2 0 0 0-2 2v2a2 2 0 0 0 2 2h4a1 1 0 0 1 1 1v4a2 2 0 0 0 2 2h2a2 2 0 0 0 2-2v-4a1 1 0 0 1 1-1h4a2 2 0 0 0 2-2v-2a2 2 0 0 0-2-2h-4a1 1 0 0 1-1-1V4a2 2 0 0 0-2-2h-2a2 2 0 0 0-2 2v4a1 1 0 0 1-1 1z"/></svg>
<div class="a" style="left:395.5px;top:552.8px;width:1px;height:18.200000000000045px;background:#a1a1aa"></div>
<div class="a" style="left:258.5px;top:571px;width:275px;height:38px;background:#fff;border-radius:3px;overflow:hidden;box-shadow:0 2px 4px rgba(0,0,0,.07)"><div class="a" style="left:0;bottom:0;width:275px;height:4px;background:#f1f2f4"></div></div>
<svg class="a" style="left:267px;top:580.5px" width="15" height="15" viewBox="0 0 16 16"><path d="M7.9 0.5c-3.8 0-3.6 1.7-3.6 1.7v1.7h3.7v.5H2.8S.3 4.1.3 8s2.2 3.8 2.2 3.8h1.3V10s-.1-2.2 2.2-2.2h3.6s2.1 0 2.1-2V2.4S12 .5 7.9.5zM5.9 1.6c.4 0 .7.3.7.7s-.3.7-.7.7-.7-.3-.7-.7.3-.7.7-.7z" fill="#3f6fa3"/><path d="M8.1 15.5c3.8 0 3.6-1.7 3.6-1.7v-1.7H8v-.5h5.2s2.5.3 2.5-3.6-2.2-3.8-2.2-3.8h-1.3V6s.1 2.2-2.2 2.2H6.4s-2.1 0-2.1 2v3.4S4 15.5 8.1 15.5zm2-1.1c-.4 0-.7-.3-.7-.7s.3-.7.7-.7.7.3.7.7-.3.7-.7.7z" fill="#f5cd4a"/></svg>
<div class="t" style="left:290.9px;top:581px;font-size:12px;line-height:14px;color:#2b3242">Open url and fetch first 500 words of ...</div>
<div class="a" style="left:510.5px;top:578px;width:15px;height:19.85px;background:#e0e7ff;border-radius:4px;color:#3730a3;font-weight:700;font-size:13px;line-height:19.85px;text-align:center">b</div>
<div class="a" style="left:395.5px;top:612px;width:1px;height:10.25px;background:#a1a1aa"></div>
<div class="a" style="left:386.75px;top:622.25px;width:18.6px;height:18.6px;background:#fff;border:1px solid #d1d5db;border-radius:5px;box-sizing:border-box"></div><svg class="i" style="left:389.50px;top:625.05px;color:#334155;stroke-width:1.6" width="13" height="13" viewBox="0 0 24 24"><path d="M4 9a2 2 0 0 0-2 2v2a2 2 0 0 0 2 2h4a1 1 0 0 1 1 1v4a2 2 0 0 0 2 2h2a2 2 0 0 0 2-2v-4a1 1 0 0 1 1-1h4a2 2 0 0 0 2-2v-2a2 2 0 0 0-2-2h-4a1 1 0 0 1-1-1V4a2 2 0 0 0-2-2h-2a2 2 0 0 0-2 2v4a1 1 0 0 1-1 1z"/></svg>
<div class="a" style="left:395.5px;top:640.85px;width:1px;height:15.149999999999977px;background:#a1a1aa"></div>
<div class="a" style="left:258.5px;top:659px;width:275px;height:33px;background:#e2e8f0;border-radius:3px;box-shadow:0 2px 3px rgba(0,0,0,.08)"></div>
<div class="t" style="left:258.5px;width:275px;text-align:center;top:668.5px;font-size:12px;line-height:14px;color:#2b3242">Result</div>
<div class="a" style="left:281.35px;top:863.8px;width:229.25px;height:26.7px;background:#fff;border:1px solid #e5e7eb;border-radius:3px;box-sizing:border-box"></div>
<svg class="i" style="left:290.5px;top:869.7px;color:#9ca3af;stroke-width:1.8" width="15" height="15" viewBox="0 0 24 24"><path d="m8 2 1.88 1.88M14.12 3.88 16 2M9 7.13v-1a3.003 3.003 0 1 1 6 0v1"/><path d="M12 20c-3.3 0-6-2.7-6-6v-3a4 4 0 0 1 4-4h4a4 4 0 0 1 4 4v3c0 3.3-2.7 6-6 6M12 20v-9M6.53 9C4.6 8.8 3 7.1 3 5M6 13H2M3 21c0-2.1 1.7-3.9 3.8-4M20.97 5c0 2.1-1.6 3.8-3.5 4M22 13h-4M17.2 17c2.1.1 3.8 1.9 3.8 4"/></svg>
<div class="t" style="left:356.35px;top:870px;font-size:12px;line-height:14px;font-weight:700;color:#2b3242">Error Handler</div>
<div class="a" style="left:483.7px;top:867.9px;width:18.8px;height:18.85px;background:#fff;border:1px solid #cbd5e1;border-radius:5px;box-sizing:border-box"></div>
<svg class="i" style="left:486.6px;top:870.8px;color:#334155;stroke-width:1.7" width="13" height="13" viewBox="0 0 24 24"><path d="M4 9a2 2 0 0 0-2 2v2a2 2 0 0 0 2 2h4a1 1 0 0 1 1 1v4a2 2 0 0 0 2 2h2a2 2 0 0 0 2-2v-4a1 1 0 0 1 1-1h4a2 2 0 0 0 2-2v-2a2 2 0 0 0-2-2h-4a1 1 0 0 1-1-1V4a2 2 0 0 0-2-2h-2a2 2 0 0 0-2 2v4a1 1 0 0 1-1 1z"/></svg>
<div class="a" style="left:48px;top:898.5px;width:696px;height:1.5px;background:#e5e7eb"></div>

<!-- ===== RIGHT PANE ===== -->
<div class="a" id="right" style="left:743.5px;top:137px;width:696.5px;height:763px;background:#fff;border-left:1px solid #e1e4e8;box-sizing:border-box"></div>
<svg class="a" style="left:763px;top:148.5px" width="19" height="19" viewBox="0 0 15 15"><rect x="0" y="0" width="15" height="15" rx="1.3" fill="#4577c4"/><text x="3.4" y="13.9" font-family="Liberation Sans" font-weight="700" font-size="9.6" fill="#fff" textLength="10.2" lengthAdjust="spacingAndGlyphs">TS</text></svg><svg class="a" style="left:773.25px;top:143.55px" width="14.7" height="13.15" viewBox="700 370 570 510"><path d="M720,640 C720,520 850,430 960,385 C1070,430 1250,520 1250,650 C1250,780 1120,860 980,860 C840,860 720,780 720,640 Z" fill="#fff" stroke="#fff" stroke-width="110"/><path d="M720,640 C720,520 850,430 960,385 C1070,430 1250,520 1250,650 C1250,780 1120,860 980,860 C840,860 720,780 720,640 Z" fill="#f4ebdc" stroke="#111" stroke-width="28"/><path d="M760,700 C800,800 900,850 990,850 C1120,850 1230,780 1240,650" fill="none" stroke="#111" stroke-width="30"/><circle cx="880" cy="612" r="34" fill="#111"/><circle cx="1055" cy="612" r="34" fill="#111"/><ellipse cx="845" cy="665" rx="32" ry="16" fill="#f7bfd0"/><ellipse cx="1090" cy="665" rx="32" ry="16" fill="#f7bfd0"/><path d="M932,688 L1012,688 L972,732 Z" fill="#b3232f"/></svg>
<div class="a" style="left:792.8px;top:141.25px;width:248.7px;height:33.5px;background:#f9fafb;border:1px solid #d1d5db;border-radius:6px;box-sizing:border-box"></div>
<div class="t" style="left:801.75px;top:149.5px;font-size:15px;line-height:17px;color:#2b3242">Fetch url of HackerNews top story</div>
<div class="a" style="left:1058.5px;top:141.25px;width:31.35px;height:33.5px;background:#dde8fb;border:1px solid #93b4f0;border-radius:5px;box-sizing:border-box"></div>
<svg class="i" style="left:1066.20px;top:150.00px;color:#1e3a8a;stroke-width:1.8;" width="16" height="16" viewBox="0 0 24 24"><path d="M12 17v5M9 10.76a2 2 0 0 1-1.11 1.79l-1.78.9A2 2 0 0 0 5 15.24V16a1 1 0 0 0 1 1h12a1 1 0 0 0 1-1v-.76a2 2 0 0 0-1.11-1.79l-1.78-.9A2 2 0 0 1 15 10.76V7a1 1 0 0 1 1-1 2 2 0 0 0 0-4H8a2 2 0 0 0 0 4 1 1 0 0 1 1 1z"/></svg>

<div class="t" style="left:1102px;top:151px;font-size:12px;line-height:14px;color:#4b5563">tag</div>
<div class="a" style="left:1123.5px;top:141.25px;width:138px;height:33px;background:#fff;border:1px solid #d1d5db;border-radius:6px;box-sizing:border-box"></div>
<svg class="i" style="left:1234.00px;top:149.50px;color:#6b7280;stroke-width:2;" width="16" height="16" viewBox="0 0 24 24"><path d="m6 9 6 6 6-6"/></svg>
<svg class="i" style="left:1277.80px;top:150.00px;color:#2d3748;stroke-width:2;" width="16" height="16" viewBox="0 0 24 24"><path d="M15.2 3a2 2 0 0 1 1.4.6l3.8 3.8a2 2 0 0 1 .6 1.4V19a2 2 0 0 1-2 2H5a2 2 0 0 1-2-2V5a2 2 0 0 1 2-2z"/><path d="M17 21v-7a1 1 0 0 0-1-1H8a1 1 0 0 0-1 1v7M7 3v4a1 1 0 0 0 1 1h7"/></svg>

<div class="t" style="left:1302.3px;top:151px;font-size:12px;line-height:14px;font-weight:700;color:#2d3748">Save to workspace</div>
<div class="a" style="left:758.3px;top:192px;width:8px;height:8px;border-radius:50%;background:#9de6a9"></div>
<svg class="i" style="left:786.80px;top:188.50px;color:#4b5563;stroke-width:1.8;" width="15" height="15" viewBox="0 0 24 24"><line x1="12" x2="12" y1="2" y2="22"/><path d="M17 5H9.5a3.5 3.5 0 0 0 0 7h5a3.5 3.5 0 0 1 0 7H6"/></svg>
<svg class="i" style="left:829.00px;top:188.50px;color:#4b5563;stroke-width:1.8;" width="15" height="15" viewBox="0 0 24 24"><line x1="12" x2="12" y1="2" y2="22"/><path d="M17 5H9.5a3.5 3.5 0 0 0 0 7h5a3.5 3.5 0 0 1 0 7H6"/></svg>
<svg class="i" style="left:870.75px;top:188.25px;color:#4b5563;stroke-width:1.8;" width="15.5" height="15.5" viewBox="0 0 24 24"><path d="M11 21.73a2 2 0 0 0 2 0l7-4A2 2 0 0 0 21 16V8a2 2 0 0 0-1-1.73l-7-4a2 2 0 0 0-2 0l-7 4A2 2 0 0 0 3 8v8a2 2 0 0 0 1 1.73z"/><path d="M12 22V12M3.3 7l7.703 4.734a2 2 0 0 0 1.994 0L20.7 7M7.5 4.27l9 5.15"/></svg>
<svg class="i" style="left:912.75px;top:188.25px;color:#4b5563;stroke-width:1.8;" width="15.5" height="15.5" viewBox="0 0 24 24"><path d="M11 21.73a2 2 0 0 0 2 0l7-4A2 2 0 0 0 21 16V8a2 2 0 0 0-1-1.73l-7-4a2 2 0 0 0-2 0l-7 4A2 2 0 0 0 3 8v8a2 2 0 0 0 1 1.73z"/><path d="M12 22V12M3.3 7l7.703 4.734a2 2 0 0 0 1.994 0L20.7 7M7.5 4.27l9 5.15"/></svg>
<svg class="i" style="left:955.00px;top:188.50px;color:#4b5563;stroke-width:1.8;" width="15" height="15" viewBox="0 0 24 24"><path d="M21 12a9 9 0 1 1-9-9c2.52 0 4.93 1 6.74 2.74L21 8"/><path d="M21 3v5h-5"/></svg>

<div class="a" style="left:996.5px;top:188px;width:28px;height:16px;border-radius:8px;background:#d1d5db"></div>
<div class="a" style="left:998.5px;top:190px;width:12px;height:12px;border-radius:50%;background:#fff"></div>
<svg class="i" style="left:1027.80px;top:188.50px;color:#4b5563;stroke-width:1.8;" width="15" height="15" viewBox="0 0 24 24"><path d="M12 3v14M5 10h14M5 21h14"/></svg>
<svg class="i" style="left:1069.00px;top:188.50px;color:#5b21b6;stroke-width:1.8;" width="15" height="15" viewBox="0 0 24 24"><path d="m21.64 3.64-1.28-1.28a1.21 1.21 0 0 0-1.72 0L2.36 18.64a1.21 1.21 0 0 0 0 1.72l1.28 1.28a1.2 1.2 0 0 0 1.72 0L21.64 5.36a1.2 1.2 0 0 0 0-1.72"/><path d="m14 7 3 3M5 6v4M19 14v4M10 2v2M7 8H3M21 16h-4M11 3H9"/></svg>
<svg class="i" style="left:1110.90px;top:188.50px;color:#4b5563;stroke-width:1.8;" width="15" height="15" viewBox="0 0 24 24"><path d="M12.22 2h-.44a2 2 0 0 0-2 2v.18a2 2 0 0 1-1 1.73l-.43.25a2 2 0 0 1-2 0l-.15-.08a2 2 0 0 0-2.73.73l-.22.38a2 2 0 0 0 .73 2.73l.15.1a2 2 0 0 1 1 1.72v.51a2 2 0 0 1-1 1.74l-.15.09a2 2 0 0 0-.73 2.73l.22.38a2 2 0 0 0 2.73.73l.15-.08a2 2 0 0 1 2 0l.43.25a2 2 0 0 1 1 1.73V20a2 2 0 0 0 2 2h.44a2 2 0 0 0 2-2v-.18a2 2 0 0 1 1-1.73l.43-.25a2 2 0 0 1 2 0l.15.08a2 2 0 0 0 2.73-.73l.22-.39a2 2 0 0 0-.73-2.73l-.15-.08a2 2 0 0 1-1-1.74v-.5a2 2 0 0 1 1-1.74l.15-.09a2 2 0 0 0 .73-2.73l-.22-.38a2 2 0 0 0-2.73-.73l-.15.08a2 2 0 0 1-2 0l-.43-.25a2 2 0 0 1-1-1.73V4a2 2 0 0 0-2-2z"/><circle cx="12" cy="12" r="3"/></svg>
<svg class="i" style="left:1406.80px;top:189.00px;color:#4b5563;stroke-width:1.8;" width="14" height="14" viewBox="0 0 24 24"><path d="m16 6 4 14M12 6v14M8 8v12M4 4v16"/></svg>

<div class="a" style="left:744.5px;top:213px;width:695.5px;height:2px;background:#e4e6ea"></div>
<div id="editor" class="a" style="left:744.5px;top:215px;width:695.5px;height:342px;background:#fffffe;overflow:hidden">
<div class="a" style="left:0;top:0;width:51px;height:342px;background:#f7f8fa"></div>
<div class="a" style="left:51px;top:0;width:700px;height:21px;border:2px solid #eeeeee;box-sizing:border-box"></div>
<div class="a" style="left:51.5px;top:42px;width:1px;height:273px;background:#d3d3d3"></div>
<div class="t mono" style="right:671.0px;top:0px;font-size:14px;line-height:21px;color:#0b216f;text-align:right">1</div><div class="t mono cl" style="left:51.5px;top:0px;font-size:14px;line-height:21px;color:#000"><span style="color:#2f7d1d">// Define the main function to fetch the URL of the top story from Hacker News</span></div>
<div class="t mono" style="right:671.0px;top:21px;font-size:14px;line-height:21px;color:#9a9a9a;text-align:right">2</div><div class="t mono cl" style="left:51.5px;top:21px;font-size:14px;line-height:21px;color:#000"><span style="color:#0000ff">export</span> <span style="color:#0000ff">async</span> <span style="color:#0000ff">function</span> main<span style="color:#0431fa">()</span>: <span style="color:#267f99">Promise</span>&lt;<span style="color:#0000ff">string</span>&gt; <span style="color:#0431fa">{</span></div>
<div class="t mono" style="right:671.0px;top:42px;font-size:14px;line-height:21px;color:#9a9a9a;text-align:right">3</div><div class="t mono cl" style="left:51.5px;top:42px;font-size:14px;line-height:21px;color:#000">  <span style="color:#2f7d1d">// Fetch the top stories from Hacker News API</span></div>
<div class="t mono" style="right:671.0px;top:63px;font-size:14px;line-height:21px;color:#9a9a9a;text-align:right">4</div><div class="t mono cl" style="left:51.5px;top:63px;font-size:14px;line-height:21px;color:#000">  <span style="color:#0000ff">const</span> response = <span style="color:#0000ff">await</span> fetch<span style="color:#319331">(</span><span style="color:#a31515">'</span><span style="color:#a31515;text-decoration:underline;text-underline-offset:3px;text-decoration-skip-ink:none">https://hacker-news.firebaseio.com/v0/topstories.json</span><span style="color:#a31515">'</span><span style="color:#319331">)</span>;</div>
<div class="t mono" style="right:671.0px;top:84px;font-size:14px;line-height:21px;color:#9a9a9a;text-align:right">5</div><div class="t mono cl" style="left:51.5px;top:84px;font-size:14px;line-height:21px;color:#000">  <span style="color:#0000ff">const</span> topStoriesIds: <span style="color:#0000ff">number</span><span style="color:#319331">[]</span> = <span style="color:#0000ff">await</span> response.json<span style="color:#319331">()</span>;</div>
<div class="t mono" style="right:671.0px;top:105px;font-size:14px;line-height:21px;color:#9a9a9a;text-align:right">6</div>
<div class="t mono" style="right:671.0px;top:126px;font-size:14px;line-height:21px;color:#9a9a9a;text-align:right">7</div><div class="t mono cl" style="left:51.5px;top:126px;font-size:14px;line-height:21px;color:#000">  <span style="color:#2f7d1d">// Get the ID of the top story</span></div>
<div class="t mono" style="right:671.0px;top:147px;font-size:14px;line-height:21px;color:#9a9a9a;text-align:right">8</div><div class="t mono cl" style="left:51.5px;top:147px;font-size:14px;line-height:21px;color:#000">  <span style="color:#0000ff">const</span> topStoryId = topStoriesIds<span style="color:#319331">[</span><span style="color:#098658">0</span><span style="color:#319331">]</span>;</div>
<div class="t mono" style="right:671.0px;top:168px;font-size:14px;line-height:21px;color:#9a9a9a;text-align:right">9</div>
<div class="t mono" style="right:671.0px;top:189px;font-size:14px;line-height:21px;color:#9a9a9a;text-align:right">10</div><div class="t mono cl" style="left:51.5px;top:189px;font-size:14px;line-height:21px;color:#000">  <span style="color:#2f7d1d">// Fetch the details of the top story using its ID</span></div>
<div class="t mono" style="right:671.0px;top:210px;font-size:14px;line-height:21px;color:#9a9a9a;text-align:right">11</div><div class="t mono cl" style="left:51.5px;top:210px;font-size:14px;line-height:21px;color:#000">  <span style="color:#0000ff">const</span> storyResponse = <span style="color:#0000ff">await</span> fetch<span style="color:#319331">(</span><span style="color:#a31515">`</span><span style="color:#a31515;text-decoration:underline;text-underline-offset:3px;text-decoration-skip-ink:none">https://hacker-news.firebaseio.com/v0/item/${topStoryId}.json</span><span style="color:#a31515">`</span><span style="color:#319331">)</span>;</div>
<div class="t mono" style="right:671.0px;top:231px;font-size:14px;line-height:21px;color:#9a9a9a;text-align:right">12</div><div class="t mono cl" style="left:51.5px;top:231px;font-size:14px;line-height:21px;color:#000">  <span style="color:#0000ff">const</span> topStory = <span style="color:#0000ff">await</span> storyResponse.json<span style="color:#319331">()</span>;</div>
<div class="t mono" style="right:671.0px;top:252px;font-size:14px;line-height:21px;color:#9a9a9a;text-align:right">13</div>
<div class="t mono" style="right:671.0px;top:273px;font-size:14px;line-height:21px;color:#9a9a9a;text-align:right">14</div><div class="t mono cl" style="left:51.5px;top:273px;font-size:14px;line-height:21px;color:#000">  <span style="color:#2f7d1d">// Return the URL of the top story</span></div>
<div class="t mono" style="right:671.0px;top:294px;font-size:14px;line-height:21px;color:#9a9a9a;text-align:right">15</div><div class="t mono cl" style="left:51.5px;top:294px;font-size:14px;line-height:21px;color:#000">  <span style="color:#0000ff">return</span> topStory.url;</div>
<div class="t mono" style="right:671.0px;top:315px;font-size:14px;line-height:21px;color:#9a9a9a;text-align:right">16</div><div class="t mono cl" style="left:51.5px;top:315px;font-size:14px;line-height:21px;color:#000"><span style="color:#0431fa">}</span></div>
<div class="t mono" style="right:671.0px;top:336px;font-size:14px;line-height:21px;color:#9a9a9a;text-align:right">17</div>
<div class="a" style="left:680.75px;top:0;width:0.5px;height:342px;background:#e3e3e3"></div>
<div class="a" style="left:681.5px;top:0;width:13.5px;height:2.2px;background:#424242"></div>
</div>
<div class="a" style="left:744.5px;top:557px;width:695.5px;height:1px;background:#e5e7eb"></div>
<div class="t" style="left:760.85px;top:563.5px;font-size:14.8px;line-height:17px;color:#475569">Step Input</div>
<div class="t" style="left:860.5px;top:563.5px;font-size:14.8px;line-height:17px;color:#475569">Test this step</div>
<div class="t" style="left:980.5px;top:563.5px;font-size:14.8px;line-height:17px;color:#475569">Advanced</div>
<div class="a" style="left:744.5px;top:588px;width:347.8px;height:1px;background:#e2e8f0"></div>
<div class="a" style="left:844px;top:586px;width:120px;height:2.2px;background:#3b4a6b"></div>
<div class="a" style="left:874px;top:605px;width:88.5px;height:33.8px;background:#3b4a6b;border-radius:7px"></div>
<div class="t" style="left:886.5px;top:614.5px;font-size:13px;line-height:15px;font-weight:700;color:#f1f1f3">Run</div>
<svg class="i" style="left:920.8px;top:615.45px;color:#a7afbf;stroke-width:2.6" width="12.9" height="12.9" viewBox="0 0 24 24"><path d="M15 6v12a3 3 0 1 0 3-3H6a3 3 0 1 0 3 3V6a3 3 0 1 0-3 3h12a3 3 0 1 0-3-3"/></svg>
<svg class="i" style="left:934.75px;top:614.25px;color:#a7afbf;stroke-width:2" width="15.5" height="15.5" viewBox="0 0 24 24"><path d="M20 4v7a4 4 0 0 1-4 4H4"/><path d="m9 10-5 5 5 5"/></svg>

<div class="a" style="left:1092px;top:557.5px;width:1px;height:342.5px;background:#e5e7eb"></div>
<svg class="i" style="left:1104.85px;top:567.00px;color:#334155;stroke-width:2;" width="16" height="16" viewBox="0 0 24 24"><path d="M3 12a9 9 0 1 0 9-9 9.75 9.75 0 0 0-6.74 2.74L3 8"/><path d="M3 3v5h5M12 7v5l4 2"/></svg>

<div class="a" style="left:1131.2px;top:561.5px;width:63.65px;height:26.85px;background:#f3f4f6;border-radius:7px"></div>
<svg class="i" style="left:1138.00px;top:568.00px;color:#334155;stroke-width:2;" width="14" height="14" viewBox="0 0 24 24"><path d="M12 17v5M9 10.76a2 2 0 0 1-1.11 1.79l-1.78.9A2 2 0 0 0 5 15.24V16a1 1 0 0 0 1 1h12a1 1 0 0 0 1-1v-.76a2 2 0 0 0-1.11-1.79l-1.78-.9A2 2 0 0 1 15 10.76V7a1 1 0 0 1 1-1 2 2 0 0 0 0-4H8a2 2 0 0 0 0 4 1 1 0 0 1 1 1z"/></svg>

<div class="t" style="left:1159px;top:568px;font-size:12px;line-height:14px;color:#334155">Pin</div>
<div class="a" style="left:1197px;top:561.5px;width:31.85px;height:26.85px;background:#4f83e9;border-radius:7px"></div>
<svg class="i" style="left:1206.00px;top:568.00px;color:#fff;stroke-width:2;" width="14" height="14" viewBox="0 0 24 24"><path d="M12 17v5M9 10.76a2 2 0 0 1-1.11 1.79l-1.78.9A2 2 0 0 0 5 15.24V16a1 1 0 0 0 1 1h12a1 1 0 0 0 1-1v-.76a2 2 0 0 0-1.11-1.79l-1.78-.9A2 2 0 0 1 15 10.76V7a1 1 0 0 1 1-1 2 2 0 0 0 0-4H8a2 2 0 0 0 0 4 1 1 0 0 1 1 1z"/></svg>

<div class="a" style="left:1231.5px;top:561.5px;width:31.35px;height:26.85px;background:#f9fafb;border-radius:7px"></div>
<svg class="i" style="left:1240.20px;top:568.00px;color:#475569;stroke-width:2;" width="14" height="14" viewBox="0 0 24 24"><path d="M20 6 9 17l-5-5"/></svg>

<div class="a" style="left:1265px;top:561.5px;width:31.8px;height:26.85px;background:#c93a31;border-radius:7px"></div>
<svg class="i" style="left:1273.90px;top:568.00px;color:#fff;stroke-width:2.2;" width="14" height="14" viewBox="0 0 24 24"><path d="M18 6 6 18M6 6l12 12"/></svg>

<div class="a" style="left:1101.3px;top:596px;width:333.7px;height:31px;border:1px solid #e2e4e9;box-sizing:border-box;background:#fffffe;overflow:hidden">
 <div class="a" style="left:0;top:0;width:20.5px;height:31px;background:#f7f8fa"></div>
 <div class="a" style="left:20.5px;top:0;width:320px;height:17px;border:2px solid #eeeeee;border-left:0;box-sizing:border-box"></div>
 <div class="t mono" style="left:6.5px;top:1.5px;font-size:12px;line-height:15px;color:#0b216f">1</div>
 <div class="t mono" style="left:19.5px;top:1.5px;font-size:12px;line-height:15px;color:#a31515">"<span style="text-decoration:underline;text-underline-offset:2px;text-decoration-skip-ink:none">https://www.geoffreylitt.com/2025/04/12/how-i-made-a-useful-ai-assistant</span></div>
 <div class="a" style="left:319.5px;top:0;width:1px;height:31px;background:#e8e8e8"></div>
 <div class="a" style="left:320.5px;top:0;width:13.5px;height:1.5px;background:#424242"></div>
</div>
<div class="a" style="left:1092.5px;top:728.5px;width:347.5px;height:171.5px;background:#f3f4f6;border-top:1px solid #d4d7dc;box-sizing:border-box"></div>
<svg class="i" style="left:1331.45px;top:733.5px;color:#1e293b;stroke-width:2.3" width="12" height="12" viewBox="0 0 24 24"><path d="m21 21-6-6m6 6v-4.8m0 4.8h-4.8M3 16.2V21m0 0h4.8M3 21l6-6M21 7.8V3m0 0h-4.8M21 3l-6 6M3 7.8V3m0 0h4.8M3 3l6 6"/></svg>

<div class="t" style="left:1352px;top:732.75px;font-size:12px;line-height:14px;color:#4b5567">Auto scroll</div>
<svg class="a" style="left:1419.75px;top:735.7px" width="8.75" height="7.3" viewBox="0 0 9 7.5" fill="none" stroke="#000" stroke-width="1.9" stroke-linecap="round" stroke-linejoin="round"><path d="M1 4.3 3.2 6.5 8 1"/></svg>
<div class="t mono" style="left:1101.3px;top:759px;font-size:11.1px;line-height:14px;color:#1f2937">Using pinned data</div>

</div></body></html>
